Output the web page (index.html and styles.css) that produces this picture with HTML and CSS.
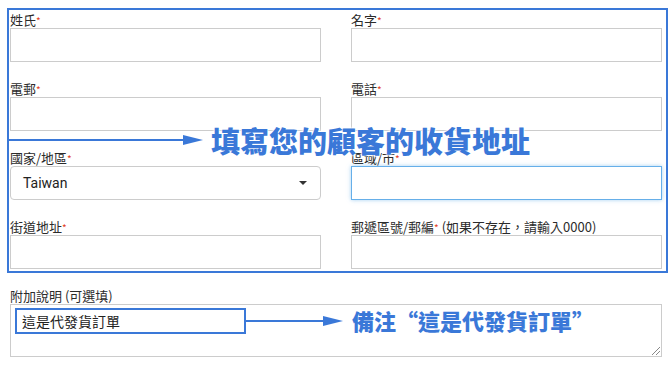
FILE: index.html
```html
<!DOCTYPE html>
<html lang="zh-Hant">

<head>
    <meta charset="UTF-8">
    <meta name="viewport" content="width=device-width, initial-scale=1.0">
    <title>收貨地址</title>
    <link rel="stylesheet" href="styles.css">
</head>

<body>

    <form class="checkout">
        <div class="address-box">
            <div class="field">
                <label>姓氏<span class="req">*</span></label>
                <input type="text">
            </div>
            <div class="field">
                <label>名字<span class="req">*</span></label>
                <input type="text">
            </div>
            <div class="field">
                <label>電郵<span class="req">*</span></label>
                <input type="text">
            </div>
            <div class="field">
                <label>電話<span class="req">*</span></label>
                <input type="text">
            </div>
            <div class="field">
                <label>國家/地區<span class="req">*</span></label>
                <div class="select">
                    <span>Taiwan</span>
                    <span class="caret"></span>
                </div>
            </div>
            <div class="field">
                <label>區域/市<span class="req">*</span></label>
                <input type="text" class="focused">
            </div>
            <div class="field">
                <label>街道地址<span class="req">*</span></label>
                <input type="text">
            </div>
            <div class="field">
                <label>郵遞區號/郵編<span class="req">*</span> (如果不存在，請輸入0000)</label>
                <input type="text">
            </div>
        </div>

        <div class="notes">
            <label>附加說明 (可選填)</label>
            <div class="textarea">
                <span class="note-value">這是代發貨訂單</span>
                <span class="grip"></span>
            </div>
        </div>

        <!-- annotations drawn over the form -->
        <svg class="arrow arrow-top" width="200" height="12" viewBox="0 0 200 12">
            <line x1="0" y1="6" x2="180" y2="6" stroke="#3a78d8" stroke-width="2" />
            <polygon points="175,1 195,6 175,11" fill="#3a78d8" />
        </svg>
        <div class="callout callout-top">填寫您的顧客的收貨地址</div>

        <svg class="arrow arrow-bottom" width="100" height="12" viewBox="0 0 100 12">
            <line x1="0" y1="6" x2="82" y2="6" stroke="#3a78d8" stroke-width="2" />
            <polygon points="77,1 97,6 77,11" fill="#3a78d8" />
        </svg>
        <div class="callout callout-bottom">備注“這是代發貨訂單”</div>
    </form>

</body>

</html>
```

FILE: styles.css
```css
body,
html {
    margin: 0;
    padding: 0;
    background: #fff;
}

body {
    font-family: "Noto Sans CJK TC", "Liberation Sans", sans-serif;
    color: #333;
}

.checkout {
    position: relative;
    width: 672px;
    height: 368px;
    padding-top: 8px;
    box-sizing: border-box;
}

.address-box {
    margin-left: 7px;
    width: 661px;
    box-sizing: border-box;
    border: 2px solid #3a78d8;
    padding: 2px 4px 2px 1px;
    display: grid;
    grid-template-columns: 311px 311px;
    column-gap: 30px;
    row-gap: 19px;
}

.field {
    display: flex;
    flex-direction: column;
}

label {
    font-size: 13px;
    line-height: 16px;
    height: 16px;
    color: #2b2b2b;
    white-space: nowrap;
}

.req {
    color: #e2401c;
    font-size: 10px;
}

input {
    height: 34px;
    box-sizing: border-box;
    border: 1px solid #ccc;
    margin: 0;
    padding: 0 10px;
    background: #fff;
}

input.focused {
    border-color: #66afe9;
    outline: none;
    box-shadow: 0 0 4px rgba(102, 175, 233, 0.6);
}

.select {
    height: 34px;
    box-sizing: border-box;
    border: 1px solid #ccc;
    border-radius: 4px;
    display: flex;
    align-items: center;
    justify-content: space-between;
    padding: 0 13px 0 12px;
    font-family: Roboto, "Liberation Sans", sans-serif;
    font-size: 14px;
    color: #222;
}

.caret {
    width: 0;
    height: 0;
    border-left: 4px solid transparent;
    border-right: 4px solid transparent;
    border-top: 4px solid #333;
}

.notes {
    margin: 14px 0 0 10px;
    width: 652px;
    display: flex;
    flex-direction: column;
}

.notes label {
    height: 17px;
    line-height: 17px;
}

.textarea {
    position: relative;
    height: 53px;
    box-sizing: border-box;
    border: 1px solid #ccc;
    padding: 3px 0 0 4px;
}

.note-value {
    display: inline-block;
    width: 231px;
    height: 26px;
    box-sizing: border-box;
    border: 2px solid #3a78d8;
    padding-left: 5px;
    font-size: 14px;
    line-height: 22px;
    color: #222;
}

.grip {
    position: absolute;
    right: 1px;
    bottom: 1px;
    width: 8px;
    height: 8px;
    background: linear-gradient(135deg, transparent 45%, #888 45%, #888 52%, transparent 52%, transparent 70%, #888 70%, #888 77%, transparent 77%);
}

.arrow {
    position: absolute;
    display: block;
}

.arrow-top {
    left: 8px;
    top: 134px;
}

.arrow-bottom {
    left: 246px;
    top: 315px;
}

.callout {
    position: absolute;
    color: #3a78d8;
    font-weight: 900;
    white-space: nowrap;
    text-shadow: 0 0 2px #fff, 0 0 2px #fff, 0 0 3px #fff;
}

.callout-top {
    left: 211px;
    top: 120px;
    font-size: 29px;
    line-height: 40px;
}

.callout-bottom {
    left: 352px;
    top: 305px;
    font-size: 22px;
    line-height: 30px;
}
```
